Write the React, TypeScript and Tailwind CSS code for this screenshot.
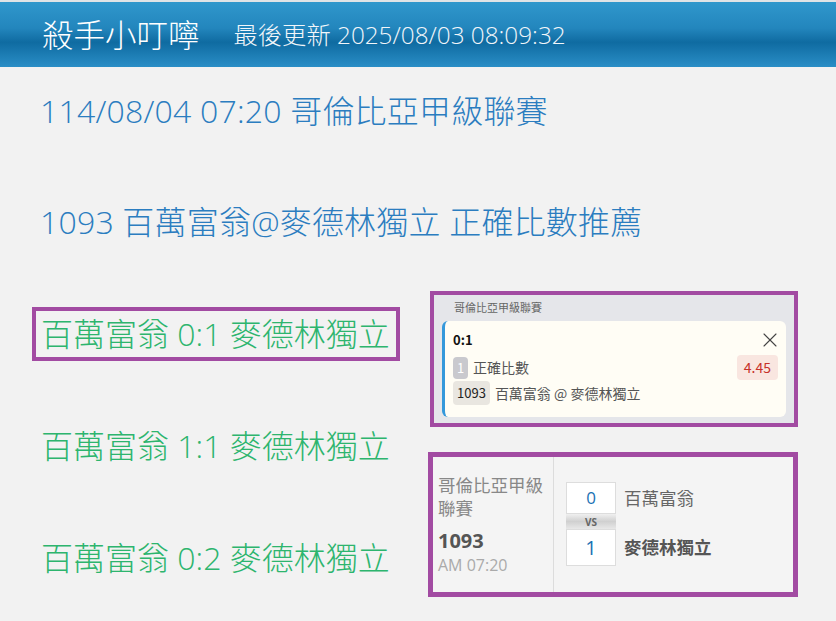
import { X } from 'lucide-react'

const FONT = { fontFamily: '"Noto Sans CJK TC", "Noto Sans", sans-serif' }
const WIDE = { fontFamily: '"Open Sans", "Noto Sans CJK TC", sans-serif' }

function Header() {
  return (
    <div className="border-t-2 border-[#dfe3e6] h-[67px] bg-[linear-gradient(to_bottom,#3097cc_0%,#2386bd_40%,#0f6ba1_62%,#2a8ec6_100%)] flex items-center px-[42px]" style={WIDE}>
      <div className="text-white text-[31.5px] leading-none font-light">殺手小叮嚀</div>
      <div className="text-[#f2f6fa] text-[24.3px] leading-none ml-[34px] mt-[2px] font-light">最後更新 2025/08/03 08:09:32</div>
    </div>
  )
}

function BetSlip() {
  return (
    <div className="ml-[2px] w-[368px] h-[136px] border-4 border-[#a24ba2] bg-[#e5e6ea] px-[8px] pt-[5px]">
      <div className="text-[11px] leading-[15px] text-[#666] pl-[12px]">哥倫比亞甲級聯賽</div>
      <div className="mt-[6px] h-[96px] bg-[#fffdf5] rounded-[6px] border-l-[3px] border-[#3498db] pl-[8px] pr-[8px] pt-[9px]">
        <div className="flex items-center justify-between h-[20px]">
          <span className="text-[13px] font-bold text-[#111]">0:1</span>
          <X size={24} strokeWidth={1.1} className="text-[#444] mr-[-4px]" />
        </div>
        <div className="flex items-center justify-between mt-[5px]">
          <div className="flex items-center">
            <span className="w-[15px] h-[22px] rounded-[4px] bg-[#c9c9ce] text-white text-[13px] flex items-center justify-center">1</span>
            <span className="ml-[5px] text-[14px] text-[#555]">正確比數</span>
          </div>
          <span className="h-[25px] px-[7px] rounded-[4px] bg-[#f9e6e0] text-[#c7322a] text-[14px] flex items-center">4.45</span>
        </div>
        <div className="flex items-center mt-[1px]">
          <span className="h-[24px] px-[4px] rounded-[4px] bg-[#e9e6e0] text-[#222] text-[13px] flex items-center">1093</span>
          <span className="ml-[5px] text-[14px] text-[#555]">百萬富翁 @ 麥德林獨立</span>
        </div>
      </div>
    </div>
  )
}

function MatchCard() {
  return (
    <div className="mt-[25px] w-[370px] h-[145px] border-[5px] border-[#a24ba2] bg-[#f4f4f4] flex" style={WIDE}>
      <div className="w-[121px] border-r border-[#dcdcdc] pl-[5px] pt-[17px]">
        <div className="text-[17.5px] leading-[23px] text-[#888] pr-[2px]">哥倫比亞甲級聯賽</div>
        <div className="text-[20px] leading-[26px] font-bold text-[#555] mt-[8px]">1093</div>
        <div className="text-[16px] leading-[20px] text-[#aaa] mt-[1px]">AM 07:20</div>
      </div>
      <div className="flex pl-[12px] pt-[25px]">
        <div className="w-[50px] flex flex-col">
          <div className="h-[32px] bg-white border border-[#ddd] text-[#1a72b4] text-[17px] flex items-center justify-center">0</div>
          <div className="h-[15px] bg-[linear-gradient(to_bottom,#f0f0f0,#d0d0d0,#e8e8e8)] text-[10px] font-bold text-[#666] flex items-center justify-center leading-none">VS</div>
          <div className="h-[37px] bg-white border border-[#ddd] text-[#1a72b4] text-[20px] flex items-center justify-center">1</div>
        </div>
        <div className="ml-[8px] flex flex-col">
          <div className="h-[32px] flex items-center text-[17.5px] text-[#666]">百萬富翁</div>
          <div className="h-[15px]" />
          <div className="h-[37px] flex items-center text-[17.5px] font-bold text-[#555]">麥德林獨立</div>
        </div>
      </div>
    </div>
  )
}

export default function App() {
  const lines = ['百萬富翁 0:1 麥德林獨立', '百萬富翁 1:1 麥德林獨立', '百萬富翁 0:2 麥德林獨立']
  return (
    <div className="w-[836px] h-[621px] overflow-hidden bg-[#f2f2f2]" style={FONT}>
      <Header />
      <div className="pl-[40px] pt-[26px] font-light" style={WIDE}>
        <div className="text-[32px] leading-[36px] tracking-[0.2px] text-[#2b7dc0]">114/08/04 07:20 哥倫比亞甲級聯賽</div>
        <div className="text-[32px] leading-[36px] tracking-[0.2px] text-[#2b7dc0] mt-[75px]">1093 百萬富翁@麥德林獨立 正確比數推薦</div>
      </div>
      <div className="flex mt-[51px]">
        <div className="w-[428px] pl-[32px] pt-[16px] flex flex-col gap-[58px] font-light" style={WIDE}>
          {lines.map((t, i) => (
            <div
              key={t}
              className={`w-[368px] h-[54px] border-4 pl-[5px] flex items-center text-[32px] leading-none text-[#2db56e] ${i === 0 ? 'border-[#a24ba2]' : 'border-transparent'}`}
            >
              {t}
            </div>
          ))}
        </div>
        <div>
          <BetSlip />
          <MatchCard />
        </div>
      </div>
    </div>
  )
}
